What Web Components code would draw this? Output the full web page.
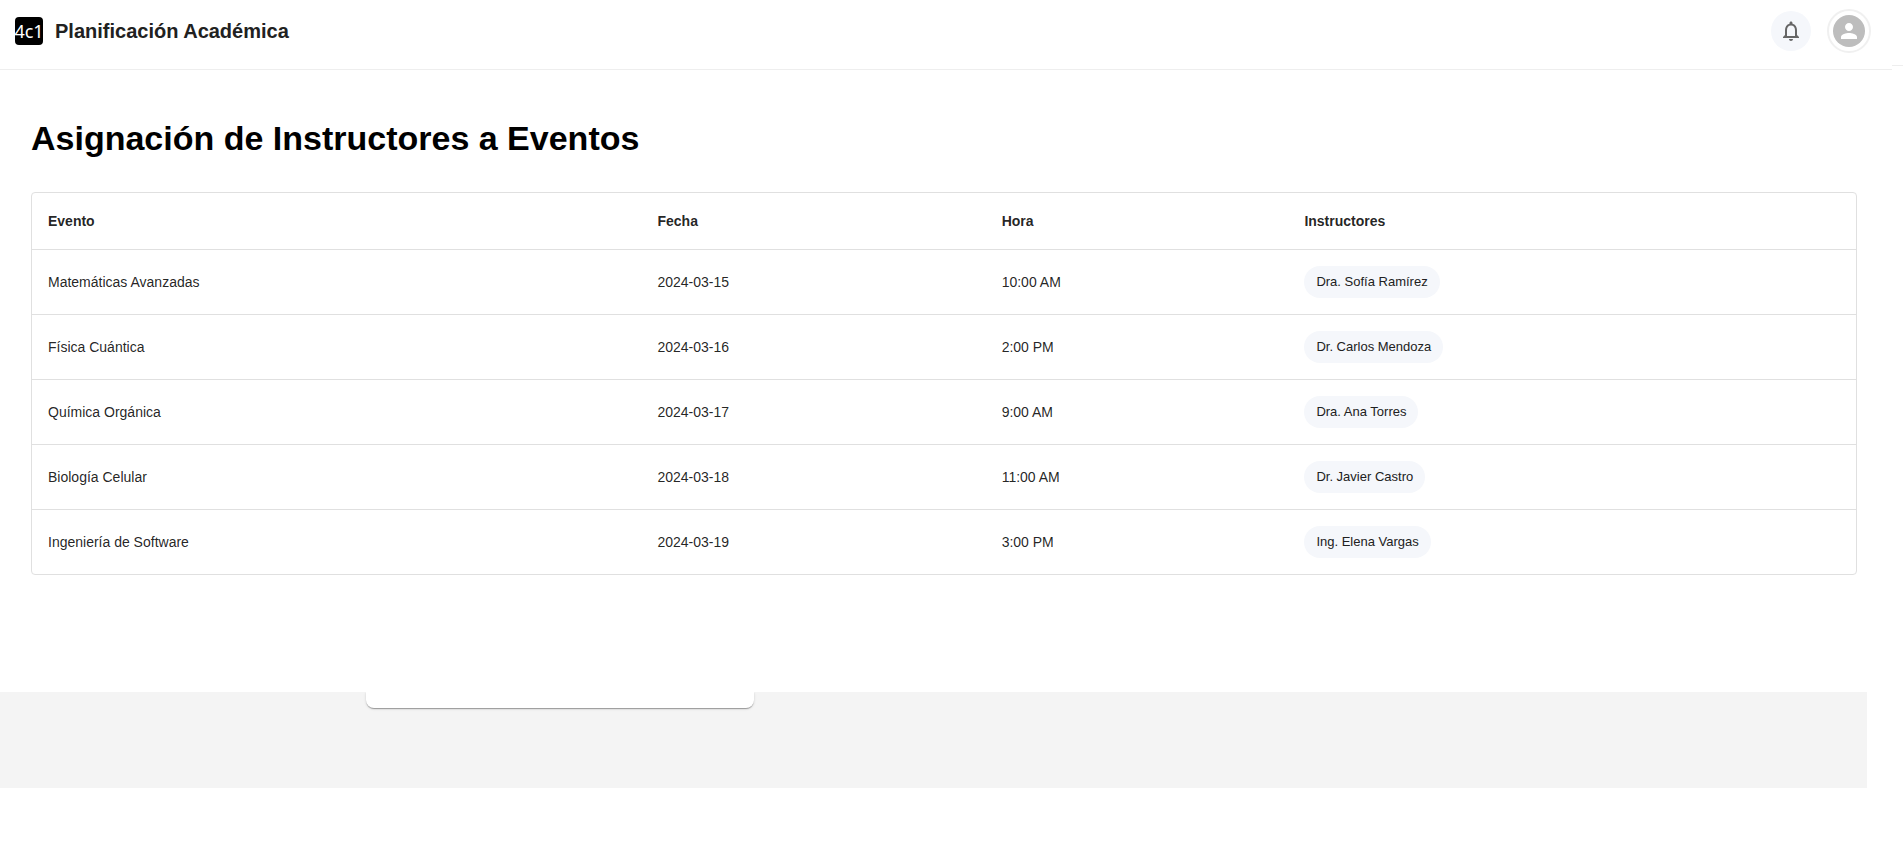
<!DOCTYPE html>
<html lang="es">
<head>
<meta charset="utf-8">
<title>Planificación Académica</title>
<style>
  body { margin: 0; background: #fff; color: rgba(0, 0, 0, 0.87); font-family: "Liberation Sans", Arial, sans-serif; }
</style>
</head>
<body>
<planning-app></planning-app>

<script>
const define = (name, markup) => {
  const template = document.createElement('template');
  template.innerHTML = markup;
  customElements.define(name, class extends HTMLElement {
    constructor() {
      super();
      this.attachShadow({ mode: 'open' }).append(template.content.cloneNode(true));
    }
  });
};

define('brand-logo', `
  <style>
    :host { display: flex; align-items: center; gap: 12px; }
    .mark { display: flex; align-items: center; justify-content: center; width: 28px; height: 28px;
      border-radius: 4px; background: #000; color: #fff; font: 18px/28px "Noto Sans", "Open Sans", sans-serif; overflow: hidden; }
    .name { font-size: 20px; line-height: 32px; font-weight: 700; color: #212121; }
  </style>
  <span class="mark">4c1</span>
  <span class="name"><slot></slot></span>
`);

define('notification-button', `
  <style>
    :host { display: block; }
    button { display: flex; align-items: center; justify-content: center; width: 40px; height: 40px; padding: 0;
      border: 0; border-radius: 50%; background: #f5f7fb; color: #666; cursor: pointer; }
    svg { width: 24px; height: 24px; display: block; fill: currentColor; }
  </style>
  <button type="button" aria-label="Notificaciones">
    <svg viewBox="0 0 24 24"><path d="M12 22c1.100 0 2-.900 2-2h-4c0 1.100.900 2 2 2zm6-6v-5c0-3.070-1.630-5.640-4.500-6.320V4c0-.830-.670-1.500-1.500-1.500s-1.500.670-1.500 1.500v.680C7.640 5.360 6 7.920 6 11v5l-2 2v1h16v-1l-2-2zm-2 1H8v-6c0-2.480 1.510-4.500 4-4.500s4 2.020 4 4.500v6z"/></svg>
  </button>
`);

define('user-avatar', `
  <style>
    :host { display: block; }
    button { display: flex; align-items: center; justify-content: center; box-sizing: border-box; width: 44px; height: 44px;
      padding: 0; border: 2px solid #f0f0f0; border-radius: 50%; background: #fff; cursor: pointer; }
    .face { display: flex; align-items: center; justify-content: center; width: 32px; height: 32px;
      border-radius: 50%; background: #bdbdbd; }
    svg { width: 24px; height: 24px; display: block; fill: #fff; }
  </style>
  <button type="button" aria-label="Cuenta">
    <span class="face"><svg viewBox="0 0 24 24"><path d="M12 12c2.210 0 4-1.790 4-4s-1.790-4-4-4-4 1.790-4 4 1.790 4 4 4zm0 2c-2.670 0-8 1.340-8 4v2h16v-2c0-2.660-5.330-4-8-4z"/></svg></span>
  </button>
`);

define('app-header', `
  <style>
    :host { display: flex; align-items: flex-start; }
    header { flex: 1; display: flex; align-items: flex-start; justify-content: space-between;
      padding: 9px 21px 16px 15px; border-bottom: 1px solid #eee; }
    brand-logo { margin-top: 6px; }
    .actions { display: flex; align-items: center; gap: 16px; }
    .edge { width: 11px; height: 65px; border-bottom: 1px solid #eee; }
  </style>
  <header>
    <brand-logo>Planificación Académica</brand-logo>
    <div class="actions">
      <notification-button></notification-button>
      <user-avatar></user-avatar>
    </div>
  </header>
  <div class="edge"></div>
`);

define('name-chip', `
  <style>
    :host { display: inline-flex; align-items: center; height: 32px; padding: 0 12px; border-radius: 16px;
      background: #f5f7fb; color: #212121; font-size: 13px; line-height: 20px; white-space: nowrap; vertical-align: middle; }
  </style>
  <slot></slot>
`);

const events = [
  ['Matemáticas Avanzadas', '2024-03-15', '10:00 AM', 'Dra. Sofía Ramírez'],
  ['Física Cuántica', '2024-03-16', '2:00 PM', 'Dr. Carlos Mendoza'],
  ['Química Orgánica', '2024-03-17', '9:00 AM', 'Dra. Ana Torres'],
  ['Biología Celular', '2024-03-18', '11:00 AM', 'Dr. Javier Castro'],
  ['Ingeniería de Software', '2024-03-19', '3:00 PM', 'Ing. Elena Vargas']
];

define('event-table', `
  <style>
    :host { display: block; border: 1px solid #e0e0e0; border-radius: 4px; background: #fff; }
    table { width: 100%; border-collapse: separate; border-spacing: 0; font-size: 14px; }
    th, td { padding: 16px; text-align: left; border-bottom: 1px solid #e0e0e0; }
    th { font-weight: 700; line-height: 24px; }
    td { line-height: 20px; }
    td:last-child { line-height: 0; }
    tbody tr:last-child td { border-bottom: 0; }
  </style>
  <table>
    <thead><tr><th scope="col">Evento</th><th scope="col">Fecha</th><th scope="col">Hora</th><th scope="col">Instructores</th></tr></thead>
    <tbody>${events.map(([name, date, time, person]) =>
      `<tr><td>${name}</td><td>${date}</td><td>${time}</td><td><name-chip>${person}</name-chip></td></tr>`).join('')}</tbody>
  </table>
`);

define('page-footer', `
  <style>
    :host { display: block; height: 96px; margin-right: 36px; background: #f4f4f4; overflow: hidden; }
    .card { width: 388px; height: 16px; margin-left: 366px; border-radius: 0 0 8px 8px; background: #fff;
      box-shadow: 0 2px 1px -1px rgba(0,0,0,.2), 0 1px 1px rgba(0,0,0,.14), 0 1px 3px rgba(0,0,0,.12); }
  </style>
  <div class="card"></div>
`);

define('planning-app', `
  <style>
    :host { display: block; }
    main { padding: 44px 46px 117px 31px; }
    h1 { margin: 0 0 30px; font-size: 34px; line-height: 48px; font-weight: 700; color: #000; }
  </style>
  <app-header></app-header>
  <main>
    <h1>Asignación de Instructores a Eventos</h1>
    <event-table></event-table>
  </main>
  <page-footer></page-footer>
`);
</script>
</body>
</html>
